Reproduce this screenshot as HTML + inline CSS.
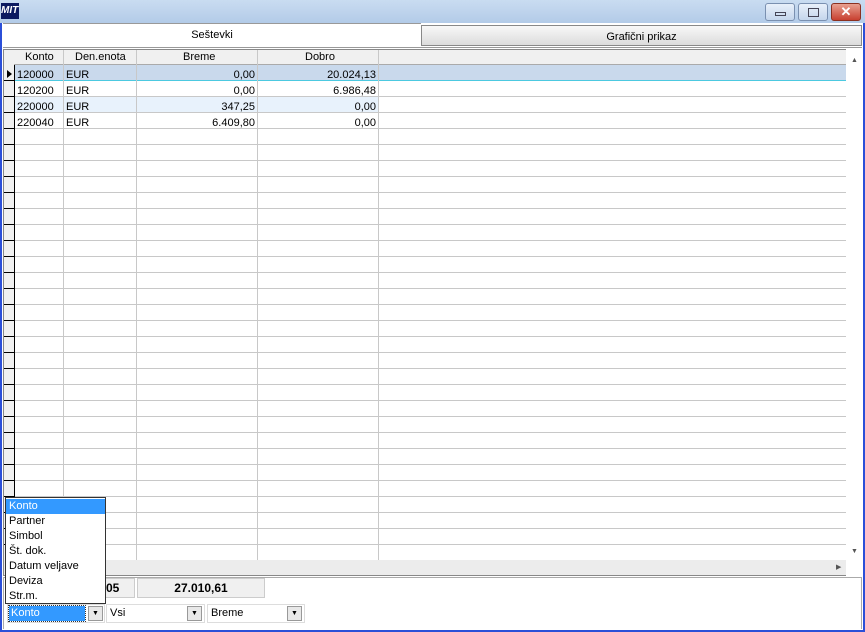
<!DOCTYPE html><html><head><style>
*{margin:0;padding:0;box-sizing:border-box}
body{width:865px;height:632px;overflow:hidden;background:#2b4fd8;font-family:"Liberation Sans",sans-serif;font-size:11px;position:relative}
.a{position:absolute}
.title{left:0;top:0;width:865px;height:23px;background:linear-gradient(#c9dcf1,#b3cbe8);}
.btn{top:3px;height:18px;border:1px solid #7a90b0;border-radius:3px;background:linear-gradient(#e8f0fa,#c5d6ec)}
.vl{top:50px;width:1px;height:510px;background:#c8c8c8}
.r{text-align:right}
</style></head><body>
<div class="a title"></div>
<div class="a" style="left:1px;top:3px;width:18px;height:16px;background:#0c1a60;color:#fff;font-size:10px;font-weight:bold;font-style:italic;line-height:16px">MIT</div>
<div class="a btn" style="left:765px;width:30px"><div class="a" style="left:9px;top:8px;width:11px;height:4px;border:1px solid #445"></div></div>
<div class="a btn" style="left:798px;width:30px"><div class="a" style="left:9px;top:4px;width:11px;height:9px;border:1px solid #445"></div></div>
<div class="a btn" style="left:831px;width:30px;background:linear-gradient(#e8a090,#c84030);border-color:#8a3020;color:#fff;text-align:center;font-weight:bold;font-size:13px;line-height:16px">✕</div>
<div class="a" style="left:0;top:23px;width:2px;height:609px;background:#2b4fd8"></div>
<div class="a" style="left:2px;top:23px;width:861px;height:607px;background:#fff"></div>
<div class="a" style="left:3px;top:23px;width:418px;height:24px;border-top:1px solid #999;text-align:center;line-height:22px;font-size:11px">Seštevki</div>
<div class="a" style="left:421px;top:25px;width:441px;height:21px;border:1px solid #888;background:linear-gradient(#f8f8f8,#dcdcdc);text-align:center;line-height:22px">Grafični prikaz</div>
<div class="a" style="left:3px;top:47px;width:859px;height:1px;background:#999"></div>
<div class="a" style="left:3px;top:49px;width:843px;height:527px;border:1px solid #888;background:#fff"></div>
<div class="a" style="left:4px;top:50px;width:842px;height:15px;background:#f0f0f0;border-bottom:1px solid #aaa"></div>
<div class="a" style="left:4px;top:50px;width:10px;height:510px;background:#f0f0f0"></div>
<div class="a" style="left:14px;top:65px;width:1px;height:495px;background:#000"></div>
<div class="a" style="left:4px;top:65px;width:10px;height:495px;background:repeating-linear-gradient(#f0f0f0 0 15px,#000 15px 16px)"></div>
<div class="a" style="left:15px;top:65px;width:831px;height:495px;background:repeating-linear-gradient(#fff 0 15px,#c8c8c8 15px 16px)"></div>
<div class="a" style="left:15px;top:65px;width:831px;height:16px;background:#c9d9ec;border-bottom:1px solid #4cc9e0"></div>
<div class="a" style="left:15px;top:97px;width:364px;height:15px;background:#e8f2fc"></div>
<div class="a vl" style="left:63px"></div><div class="a vl" style="left:136px"></div><div class="a vl" style="left:257px"></div><div class="a vl" style="left:378px"></div>
<div class="a" style="left:7px;top:70px;width:0;height:0;border-left:5px solid #000;border-top:4px solid transparent;border-bottom:4px solid transparent"></div>
<div class="a" style="top:51px;left:25px">Konto</div><div class="a" style="top:51px;left:75px">Den.enota</div><div class="a" style="top:51px;left:183px">Breme</div><div class="a" style="top:51px;left:305px">Dobro</div>
<div class="a" style="left:17px;top:67px;line-height:16px">120000<br>120200<br>220000<br>220040</div>
<div class="a" style="left:66px;top:67px;line-height:16px">EUR<br>EUR<br>EUR<br>EUR</div>
<div class="a r" style="left:140px;width:115px;top:67px;line-height:16px">0,00<br>0,00<br>347,25<br>6.409,80</div>
<div class="a r" style="left:260px;width:116px;top:67px;line-height:16px">20.024,13<br>6.986,48<br>0,00<br>0,00</div>
<div class="a" style="left:846px;top:50px;width:16px;height:510px;background:#fff"></div>
<div class="a" style="left:851px;top:57px;color:#555;font-size:7px">▲</div>
<div class="a" style="left:851px;top:548px;color:#555;font-size:7px">▼</div>
<div class="a" style="left:4px;top:560px;width:842px;height:15px;background:#ececec"></div>
<div class="a" style="left:836px;top:563px;color:#555;font-size:7px">▶</div>
<div class="a" style="left:3px;top:577px;width:859px;height:52px;border:1px solid #aaa;border-bottom:none"></div>
<div class="a" style="left:105px;top:578px;width:30px;height:20px;background:#f0f0f0;border:1px solid #ccc;font-weight:bold;font-size:12px;line-height:18px">05</div>
<div class="a" style="left:137px;top:578px;width:128px;height:20px;background:#f0f0f0;border:1px solid #ccc;font-weight:bold;font-size:12px;line-height:18px;text-align:center">27.010,61</div>
<div class="a" style="left:7px;top:604px;width:98px;height:19px;border:1px solid #ddd"></div>
<div class="a" style="left:9px;top:606px;width:76px;height:15px;background:#3399ff;color:#fff;outline:1px dotted #333;line-height:15px;padding-left:2px">Konto</div>
<div class="a" style="left:88px;top:606px;width:15px;height:15px;background:#e8e8e8;border:1px solid #999;font-size:7px;text-align:center;line-height:13px">▼</div>
<div class="a" style="left:106px;top:604px;width:99px;height:19px;border:1px solid #ddd;line-height:17px;padding-left:3px">Vsi</div>
<div class="a" style="left:187px;top:606px;width:15px;height:15px;background:#e8e8e8;border:1px solid #999;font-size:7px;text-align:center;line-height:13px">▼</div>
<div class="a" style="left:207px;top:604px;width:98px;height:19px;border:1px solid #ddd;line-height:17px;padding-left:3px">Breme</div>
<div class="a" style="left:287px;top:606px;width:15px;height:15px;background:#e8e8e8;border:1px solid #999;font-size:7px;text-align:center;line-height:13px">▼</div>
<div class="a" style="left:5px;top:497px;width:101px;height:107px;background:#fff;border:1px solid #333;line-height:15px;padding-top:1px">
<div style="background:#3399ff;color:#fff;padding-left:3px">Konto</div>
<div style="padding-left:3px">Partner</div><div style="padding-left:3px">Simbol</div><div style="padding-left:3px">Št. dok.</div><div style="padding-left:3px">Datum veljave</div><div style="padding-left:3px">Deviza</div><div style="padding-left:3px">Str.m.</div>
</div>
<div class="a" style="left:863px;top:23px;width:2px;height:609px;background:#2b4fd8"></div>
<div class="a" style="left:0;top:630px;width:865px;height:2px;background:#2b4fd8"></div>
</body></html>
